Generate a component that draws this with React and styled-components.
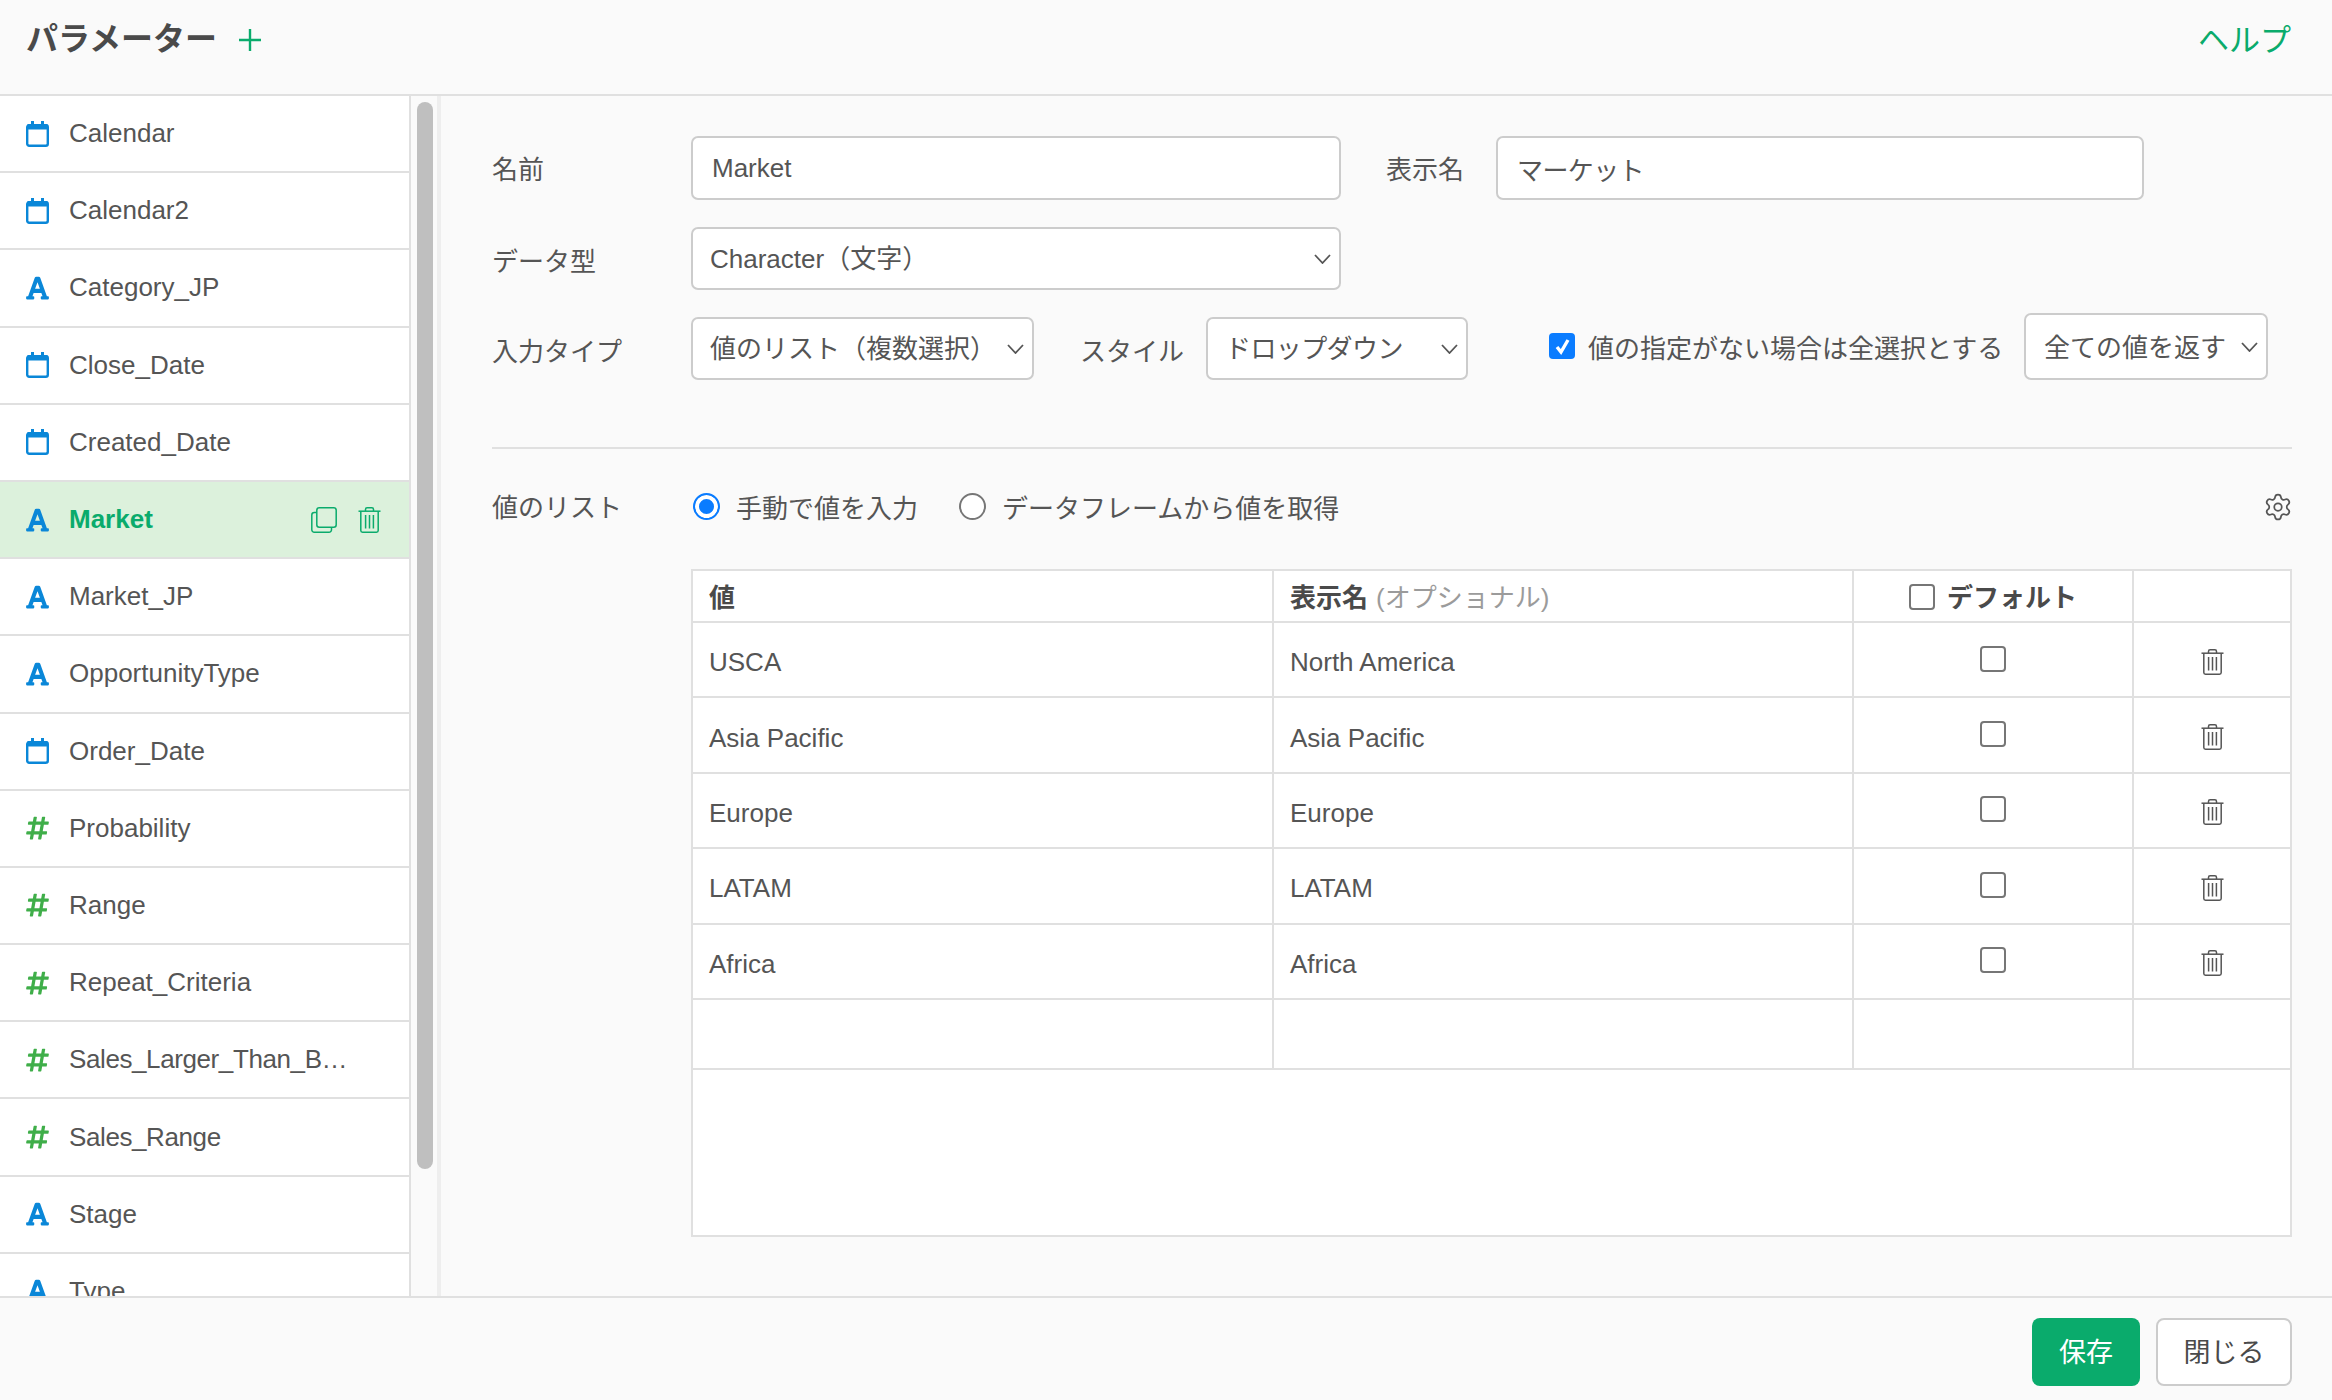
import React from 'react'
import styled, { createGlobalStyle } from 'styled-components'
import { FaFont, FaHashtag } from 'react-icons/fa'
import { Settings } from 'lucide-react'

const GREEN = '#0aab6c'
const BLUE = '#0a87d8'
const LINE = '#e0e0e0'
const TEXT = '#555555'

const params = [
  ['date', 'Calendar'],
  ['date', 'Calendar2'],
  ['text', 'Category_JP'],
  ['date', 'Close_Date'],
  ['date', 'Created_Date'],
  ['text', 'Market'],
  ['text', 'Market_JP'],
  ['text', 'OpportunityType'],
  ['date', 'Order_Date'],
  ['num', 'Probability'],
  ['num', 'Range'],
  ['num', 'Repeat_Criteria'],
  ['num', 'Sales_Larger_Than_B…', true],
  ['num', 'Sales_Range', true],
  ['text', 'Stage'],
  ['text', 'Type'],
]

const values = [
  ['USCA', 'North America'],
  ['Asia Pacific', 'Asia Pacific'],
  ['Europe', 'Europe'],
  ['LATAM', 'LATAM'],
  ['Africa', 'Africa'],
]

const CalendarIcon = () => (
  <svg width="23" height="26" viewBox="0 0 23 26">
    <rect x="1.2" y="4.2" width="20.6" height="20.6" rx="2" fill="none" stroke={BLUE} strokeWidth="2.4" />
    <rect x="1" y="3" width="21" height="5.5" rx="1.5" fill={BLUE} />
    <rect x="5" y="0" width="3" height="5" fill={BLUE} />
    <rect x="15" y="0" width="3" height="5" fill={BLUE} />
  </svg>
)

const TrashIcon = ({ color }) => (
  <svg width="23" height="26" viewBox="0 0 23 26" fill="none" stroke={color} strokeWidth="1.5">
    <path d="M0.5 4.2H22.5" />
    <path d="M7.5 4V2.4A1.6 1.6 0 0 1 9.1 0.8H13.9A1.6 1.6 0 0 1 15.5 2.4V4" />
    <path d="M2.8 4.2V23.5A1.7 1.7 0 0 0 4.5 25.2H18.5A1.7 1.7 0 0 0 20.2 23.5V4.2" />
    <path d="M7.6 8V21.5M11.5 8V21.5M15.4 8V21.5" />
  </svg>
)

const CopyIcon = () => (
  <svg width="26" height="26" viewBox="0 0 26 26" fill="none" stroke={GREEN} strokeWidth="1.5">
    <rect x="5.8" y="0.8" width="19.4" height="19.4" rx="2.5" />
    <path d="M5.8 5.6H3.3A2.5 2.5 0 0 0 0.8 8.1V22.7A2.5 2.5 0 0 0 3.3 25.2H18A2.5 2.5 0 0 0 20.5 22.7V20.2" />
  </svg>
)

const Chevron = () => (
  <ChevronBox>
    <svg width="17" height="10" viewBox="0 0 17 10" fill="none" stroke="#555" strokeWidth="1.8">
      <path d="M1 1L8.5 9L16 1" />
    </svg>
  </ChevronBox>
)

const TypeIcon = ({ type }) => {
  if (type === 'date') return <CalendarIcon />
  if (type === 'num') return <FaHashtag size={26} color="#3fae49" />
  return <FaFont size={26} color={BLUE} />
}

export default function App() {
  return (
    <Page>
      <GlobalStyle />
      <Header>
        <TitleGroup>
          <Title>パラメーター</Title>
          <PlusIcon width="22" height="22" viewBox="0 0 22 22" stroke={GREEN} strokeWidth="2.4">
            <path d="M11 0V22M0 11H22" />
          </PlusIcon>
        </TitleGroup>
        <HelpLink>ヘルプ</HelpLink>
      </Header>

      <Body>
        <Sidebar>
          <ParamList>
            {params.map(([type, name, tight]) => (
              <ParamRow key={name} $active={name === 'Market'}>
                <IconSlot><TypeIcon type={type} /></IconSlot>
                <ParamName $active={name === 'Market'} $tight={tight}>{name}</ParamName>
                {name === 'Market' && (
                  <RowActions>
                    <CopyIcon />
                    <TrashIcon color={GREEN} />
                  </RowActions>
                )}
              </ParamRow>
            ))}
          </ParamList>
          <ScrollTrack>
            <ScrollThumb />
          </ScrollTrack>
        </Sidebar>

        <Content>
          <FormRow>
            <Label>名前</Label>
            <TextField $w={650}>Market</TextField>
            <Label $w={110} $ml={45}>表示名</Label>
            <TextField $w={648} $tight>マーケット</TextField>
          </FormRow>
          <FormRow>
            <Label $low>データ型</Label>
            <SelectField $w={650}>Character（文字）<Chevron /></SelectField>
          </FormRow>
          <FormRow>
            <Label $low>入力タイプ</Label>
            <SelectField $w={343}>値のリスト（複数選択）<Chevron /></SelectField>
            <Label $low $w={126} $ml={46}>スタイル</Label>
            <SelectField $w={262} $tight>ドロップダウン<Chevron /></SelectField>
            <CheckLabel>
              <CheckedBox>
                <svg width="17" height="17" viewBox="0 0 17 17" fill="none" stroke="#fff" strokeWidth="3.4">
                  <path d="M3 9L7 14L14 2" />
                </svg>
              </CheckedBox>
              値の指定がない場合は全選択とする
            </CheckLabel>
            <TallField>全ての値を返す<Chevron /></TallField>
          </FormRow>

          <Divider />

          <RadioRow>
            <Label>値のリスト</Label>
            <RadioOption>
              <Radio $on />
              手動で値を入力
            </RadioOption>
            <RadioOption>
              <Radio />
              データフレームから値を取得
            </RadioOption>
            <GearButton>
              <Settings size={30} strokeWidth={1.4} color="#555" />
            </GearButton>
          </RadioRow>

          <TableBox>
            <HeadRow>
              <Cell><strong>値</strong></Cell>
              <Cell><strong>表示名</strong> <Hint>(オプショナル)</Hint></Cell>
              <Cell $center>
                <HeadBox />
                <strong>デフォルト</strong>
              </Cell>
              <Cell />
            </HeadRow>
            {values.map(([value, label]) => (
              <ValueRow key={value}>
                <ValueCell>{value}</ValueCell>
                <ValueCell>{label}</ValueCell>
                <Cell $center><Box /></Cell>
                <TrashCell $center><TrashIcon color="#555" /></TrashCell>
              </ValueRow>
            ))}
            <EmptyRow>
              <Cell />
              <Cell />
              <Cell />
              <Cell />
            </EmptyRow>
          </TableBox>
        </Content>
      </Body>

      <Footer>
        <SaveButton>保存</SaveButton>
        <CloseButton>閉じる</CloseButton>
      </Footer>
    </Page>
  )
}

const GlobalStyle = createGlobalStyle`
  html, body {
    margin: 0;
    padding: 0;
    background: #fafafa;
  }
  * {
    box-sizing: border-box;
  }
`

const Page = styled.div`
  width: 2332px;
  height: 1400px;
  display: flex;
  flex-direction: column;
  overflow: hidden;
  background: #fafafa;
  color: ${TEXT};
  font-family: "Liberation Sans", "Noto Sans CJK JP", sans-serif;
  font-size: 26px;
`

const Header = styled.header`
  height: 96px;
  flex: none;
  display: flex;
  justify-content: space-between;
  padding: 19px 41px 0 26px;
  border-bottom: 2px solid ${LINE};
`

const TitleGroup = styled.div`
  display: flex;
  align-items: flex-start;
  gap: 22px;
`

const Title = styled.h1`
  margin: 0;
  font-size: 32px;
  line-height: 40px;
  font-weight: 700;
  color: #4a4a4a;
`

const PlusIcon = styled.svg`
  margin-top: 10px;
`

const HelpLink = styled.a`
  font-size: 31px;
  line-height: 44px;
  color: ${GREEN};
`

const Body = styled.div`
  flex: 1;
  min-height: 0;
  display: flex;
`

const Sidebar = styled.aside`
  width: 441px;
  flex: none;
  display: flex;
  overflow: hidden;
  border-right: 4px solid #eeeeee;
`

const ParamList = styled.div`
  width: 411px;
  flex: none;
  background: #fff;
  border-right: 2px solid ${LINE};
`

const ParamRow = styled.div`
  height: 77.2px;
  display: flex;
  align-items: center;
  padding: 0 28px 0 26px;
  border-bottom: 2px solid ${LINE};
  background: ${(p) => (p.$active ? '#dcf1dc' : '#fff')};
`

const IconSlot = styled.span`
  width: 23px;
  height: 26px;
  margin-right: 20px;
  flex: none;
  display: flex;
  align-items: center;
  justify-content: center;
`

const ParamName = styled.span`
  flex: 1;
  white-space: nowrap;
  letter-spacing: ${(p) => (p.$tight ? '-0.4px' : '0')};
  font-weight: ${(p) => (p.$active ? 700 : 400)};
  color: ${(p) => (p.$active ? GREEN : TEXT)};
`

const RowActions = styled.span`
  display: flex;
  align-items: center;
  gap: 21px;
`

const ScrollTrack = styled.div`
  width: 26px;
  flex: none;
  padding: 6px 4px 0 6px;
`

const ScrollThumb = styled.div`
  height: 1067px;
  border-radius: 8px;
  background: #bfbfbf;
`

const Content = styled.main`
  flex: 1;
  min-width: 0;
  padding: 41px 40px 0 51px;
`

const FormRow = styled.div`
  display: flex;
  align-items: flex-end;
  height: 63px;
  margin-bottom: 27px;
`

const Label = styled.label`
  width: ${(p) => p.$w || 199}px;
  margin-left: ${(p) => p.$ml || 0}px;
  flex: none;
  align-self: center;
  padding-top: ${(p) => (p.$low ? 6 : 3)}px;
  line-height: 34px;
`

const Field = styled.div`
  position: relative;
  width: ${(p) => p.$w}px;
  height: 63px;
  flex: none;
  display: flex;
  align-items: center;
  padding: 0 19px;
  white-space: nowrap;
  letter-spacing: ${(p) => (p.$tight ? '-0.6px' : '0')};
  background: #fff;
  border: 2px solid #cccccc;
  border-radius: 7px;
`

const TextField = styled(Field)`
  height: 64px;
`

const SelectField = styled(Field)`
  padding: 0 17px 5px;
`

const TallField = styled(Field)`
  width: 244px;
  height: 67px;
  margin-left: 21px;
  padding: 0 18px 2px;
`

const ChevronBox = styled.span`
  position: absolute;
  right: 8px;
  top: 50%;
  display: flex;
  transform: translateY(-50%);
`

const CheckLabel = styled.div`
  width: 454px;
  margin-left: 81px;
  flex: none;
  display: flex;
  align-items: center;
  gap: 13px;
  height: 63px;
  padding-bottom: 5px;
  white-space: nowrap;
`

const CheckedBox = styled.span`
  width: 26px;
  height: 26px;
  flex: none;
  display: flex;
  align-items: center;
  justify-content: center;
  border-radius: 4px;
  background: #0a7cff;
`

const Divider = styled.hr`
  height: 2px;
  margin: 67px 0 0;
  border: none;
  background: ${LINE};
`

const RadioRow = styled.div`
  display: flex;
  align-items: center;
  height: 54px;
  margin-top: 30px;
  margin-bottom: 36px;
`

const RadioOption = styled.div`
  display: flex;
  align-items: center;
  gap: 16px;
  margin-left: 2px;
  margin-right: 39px;
  white-space: nowrap;
`

const Radio = styled.span`
  width: 27px;
  height: 27px;
  flex: none;
  border-radius: 50%;
  background: ${(p) => (p.$on ? '#0a7cff' : '#fff')};
  border: 2px solid ${(p) => (p.$on ? '#0a7cff' : '#767676')};
  box-shadow: ${(p) => (p.$on ? 'inset 0 0 0 4px #fff' : 'none')};
`

const GearButton = styled.span`
  margin-left: auto;
  margin-right: -1px;
  margin-top: 2px;
  display: flex;
`

const TableBox = styled.div`
  width: 1601px;
  margin-left: 199px;
  height: 668px;
  background: #fff;
  border: 2px solid ${LINE};
`

const HeadRow = styled.div`
  display: grid;
  grid-template-columns: 581px 580px 280px 1fr;
  height: 52px;
  border-bottom: 2px solid ${LINE};
`

const ValueRow = styled(HeadRow)`
  height: 75.4px;
`

const EmptyRow = styled(HeadRow)`
  height: 70px;
`

const Cell = styled.div`
  display: flex;
  align-items: center;
  justify-content: ${(p) => (p.$center ? 'center' : 'flex-start')};
  gap: 12px;
  padding: ${(p) => (p.$center ? '0' : '0 16px')};
  border-right: 2px solid ${LINE};
  white-space: pre;

  &:last-child {
    border-right: none;
  }

  strong {
    color: #4a4a4a;
    margin-top: -2px;
  }
`

const ValueCell = styled(Cell)`
  padding-top: 6px;
`

const TrashCell = styled(Cell)`
  padding-top: 4px;
`

const Hint = styled.span`
  margin-left: -4px;
  margin-top: -2px;
  color: #9b9b9b;
`

const Box = styled.span`
  width: 26px;
  height: 26px;
  flex: none;
  background: #fff;
  border: 2px solid #767676;
  border-radius: 4px;
  margin-top: -2px;
`

const HeadBox = styled(Box)`
  margin-top: 1px;
`

const Footer = styled.footer`
  height: 104px;
  flex: none;
  display: flex;
  justify-content: flex-end;
  gap: 16px;
  padding: 20px 40px 0 0;
  border-top: 2px solid ${LINE};
`

const SaveButton = styled.button`
  width: 108px;
  height: 68px;
  padding: 0 0 4px;
  border: none;
  border-radius: 8px;
  background: ${GREEN};
  color: #fff;
  font: inherit;
  font-size: 27px;
`

const CloseButton = styled.button`
  width: 136px;
  height: 68px;
  padding: 0 0 4px;
  border: 2px solid #cccccc;
  border-radius: 8px;
  background: #fff;
  color: #4a4a4a;
  font: inherit;
  font-size: 27px;
`
